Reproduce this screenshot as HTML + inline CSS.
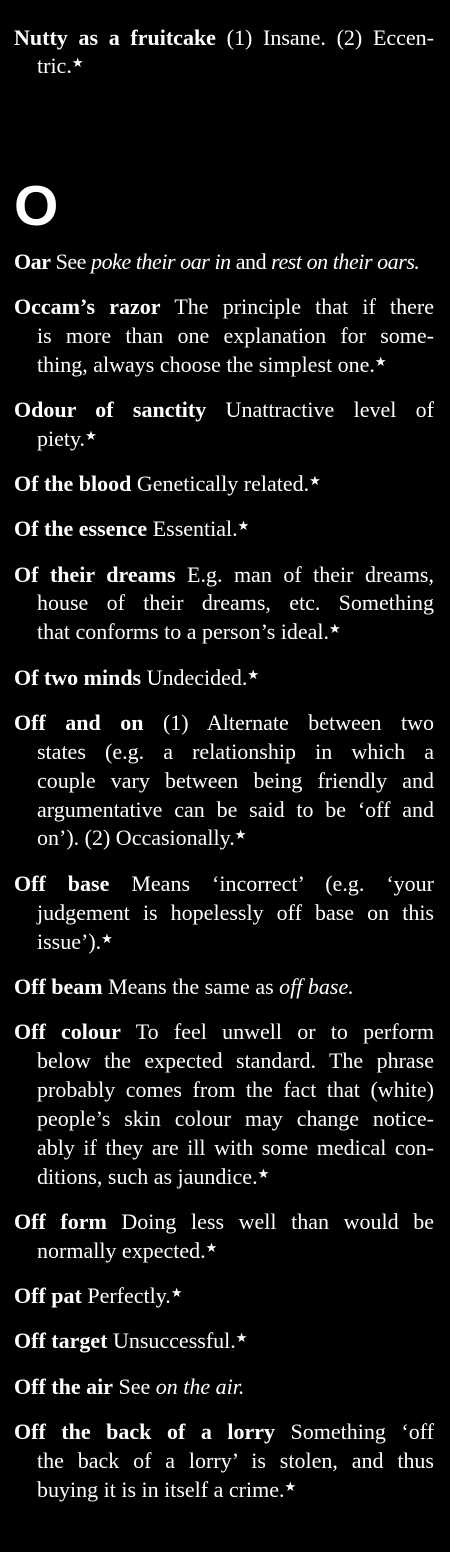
<!DOCTYPE html>
<html><head><meta charset="utf-8"><style>
html,body{margin:0;padding:0;background:#000;}
body{width:450px;height:1552px;overflow:hidden;color:#fff;font-family:"Liberation Serif",serif;font-size:22px;line-height:28.9px;position:relative;}
.s{position:absolute;left:14px;width:420px;}
.e{margin:0 0 16.4px 0;}
.l{white-space:nowrap;text-align:justify;text-align-last:justify;height:28.9px;}
.l.i{padding-left:23px;}
.l.z{text-align-last:left;}
b{font-weight:bold;}
.o{position:absolute;left:14px;top:178px;font-family:"Liberation Sans",sans-serif;font-weight:bold;font-size:57px;line-height:57px;}
sup{font-size:13px;line-height:0;vertical-align:6px;}
</style></head><body>
<div class="s" style="top:23.5px">
<div class="e"><div class="l"><b>Nutty as a fruitcake</b> (1) Insane. (2) Eccen-</div><div class="l i z">tric.<sup>★</sup></div></div>
</div>
<div class="o">O</div>
<div class="s" style="top:247.5px">
<div class="e"><div class="l z" style="letter-spacing:-0.45px"><b>Oar</b> See <i>poke their oar in</i> and <i>rest on their oars.</i></div></div>
<div class="e"><div class="l"><b>Occam’s razor</b> The principle that if there</div><div class="l i">is more than one explanation for some-</div><div class="l i z">thing, always choose the simplest one.<sup>★</sup></div></div>
<div class="e"><div class="l"><b>Odour of sanctity</b> Unattractive level of</div><div class="l i z">piety.<sup>★</sup></div></div>
<div class="e"><div class="l z"><b>Of the blood</b> Genetically related.<sup>★</sup></div></div>
<div class="e"><div class="l z"><b>Of the essence</b> Essential.<sup>★</sup></div></div>
<div class="e"><div class="l"><b>Of their dreams</b> E.g. man of their dreams,</div><div class="l i">house of their dreams, etc. Something</div><div class="l i z">that conforms to a person’s ideal.<sup>★</sup></div></div>
<div class="e"><div class="l z"><b>Of two minds</b> Undecided.<sup>★</sup></div></div>
<div class="e"><div class="l"><b>Off and on</b> (1) Alternate between two</div><div class="l i">states (e.g. a relationship in which a</div><div class="l i">couple vary between being friendly and</div><div class="l i">argumentative can be said to be ‘off and</div><div class="l i z">on’). (2) Occasionally.<sup>★</sup></div></div>
<div class="e"><div class="l"><b>Off base</b> Means ‘incorrect’ (e.g. ‘your</div><div class="l i">judgement is hopelessly off base on this</div><div class="l i z">issue’).<sup>★</sup></div></div>
<div class="e"><div class="l z"><b>Off beam</b> Means the same as <i>off base.</i></div></div>
<div class="e"><div class="l"><b>Off colour</b> To feel unwell or to perform</div><div class="l i">below the expected standard. The phrase</div><div class="l i">probably comes from the fact that (white)</div><div class="l i">people’s skin colour may change notice-</div><div class="l i">ably if they are ill with some medical con-</div><div class="l i z">ditions, such as jaundice.<sup>★</sup></div></div>
<div class="e"><div class="l"><b>Off form</b> Doing less well than would be</div><div class="l i z">normally expected.<sup>★</sup></div></div>
<div class="e"><div class="l z"><b>Off pat</b> Perfectly.<sup>★</sup></div></div>
<div class="e"><div class="l z"><b>Off target</b> Unsuccessful.<sup>★</sup></div></div>
<div class="e"><div class="l z"><b>Off the air</b> See <i>on the air.</i></div></div>
<div class="e"><div class="l"><b>Off the back of a lorry</b> Something ‘off</div><div class="l i">the back of a lorry’ is stolen, and thus</div><div class="l i z">buying it is in itself a crime.<sup>★</sup></div></div>
</div>
</body></html>
